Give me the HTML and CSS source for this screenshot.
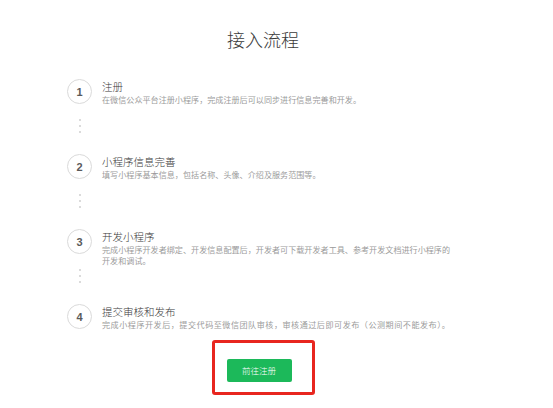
FILE: index.html
```html
<!DOCTYPE html>
<html lang="zh-CN">
<head>
<meta charset="utf-8">
<title>接入流程</title>
<link rel="stylesheet" href="styles.css">
</head>
<body>
<div class="page">
  <h1 class="heading">接入流程</h1>
  <div class="steps">
    <div class="step">
      <div class="rail">
        <div class="num">1</div>
        <div class="dots"><span></span><span></span><span></span></div>
      </div>
      <div class="text">
        <div class="title">注册</div>
        <div class="desc">在微信公众平台注册小程序，完成注册后可以同步进行信息完善和开发。</div>
      </div>
    </div>
    <div class="step">
      <div class="rail">
        <div class="num">2</div>
        <div class="dots"><span></span><span></span><span></span></div>
      </div>
      <div class="text">
        <div class="title">小程序信息完善</div>
        <div class="desc">填写小程序基本信息，包括名称、头像、介绍及服务范围等。</div>
      </div>
    </div>
    <div class="step">
      <div class="rail">
        <div class="num">3</div>
        <div class="dots"><span></span><span></span><span></span></div>
      </div>
      <div class="text">
        <div class="title">开发小程序</div>
        <div class="desc">完成小程序开发者绑定、开发信息配置后，开发者可下载开发者工具、参考开发文档进行小程序的开发和调试。</div>
      </div>
    </div>
    <div class="step step-last">
      <div class="rail">
        <div class="num">4</div>
      </div>
      <div class="text">
        <div class="title">提交审核和发布</div>
        <div class="desc desc-wide">完成小程序开发后，提交代码至微信团队审核，审核通过后即可发布（公测期间不能发布）。</div>
      </div>
    </div>
  </div>
  <div class="mark">
    <button class="btn" type="button">前往注册</button>
  </div>
</div>
</body>
</html>
```

FILE: styles.css
```css
html, body {
  margin: 0;
  padding: 0;
  background: #ffffff;
}

body {
  font-family: "Noto Sans CJK SC", "Noto Sans", sans-serif;
  color: #353535;
}

.page {
  width: 526px;
  padding-top: 27px;
}

.heading {
  margin: 0;
  font-size: 18px;
  line-height: 24px;
  font-weight: 300;
  text-align: center;
  color: #3a3a3a;
}

.steps {
  margin-top: 28px;
  padding-left: 67px;
}

.step {
  display: flex;
  height: 75px;
}

.step-last {
  height: 30px;
}

.rail {
  width: 25px;
  flex: none;
  display: flex;
  flex-direction: column;
  align-items: center;
}

.num {
  width: 25px;
  height: 25px;
  box-sizing: border-box;
  border: 1px solid #dadada;
  border-radius: 50%;
  display: flex;
  align-items: center;
  justify-content: center;
  font-family: "Liberation Sans", Arial, sans-serif;
  font-weight: 700;
  font-size: 11px;
  color: #5a5a5a;
}

.dots {
  margin-top: 15px;
  display: flex;
  flex-direction: column;
  gap: 4px;
}

.dots span {
  display: block;
  width: 2px;
  height: 2px;
  border-radius: 1px;
  background: #cfcfcf;
}

.text {
  margin-left: 10px;
  padding-top: 2px;
  width: 355px;
}

.title {
  font-size: 10.5px;
  line-height: 12px;
  font-weight: 300;
  color: #3a3a3a;
}

.desc {
  margin-top: 1px;
  font-size: 8.1px;
  line-height: 11px;
  color: #9b9b9b;
}

.desc-wide {
  letter-spacing: 0.5px;
}

.mark {
  width: 70px;
  margin: 6px auto 0;
  padding: 16px 15px 10px 12px;
  border: 3px solid #e8261f;
  border-radius: 3px;
}

.btn {
  display: block;
  width: 65px;
  height: 23px;
  padding: 0;
  border: 0;
  border-radius: 2px;
  background: #1cb95a;
  color: #ffffff;
  font-family: "Noto Sans CJK SC", sans-serif;
  font-size: 8.5px;
  font-weight: 300;
  line-height: 23px;
  text-align: center;
}
```
